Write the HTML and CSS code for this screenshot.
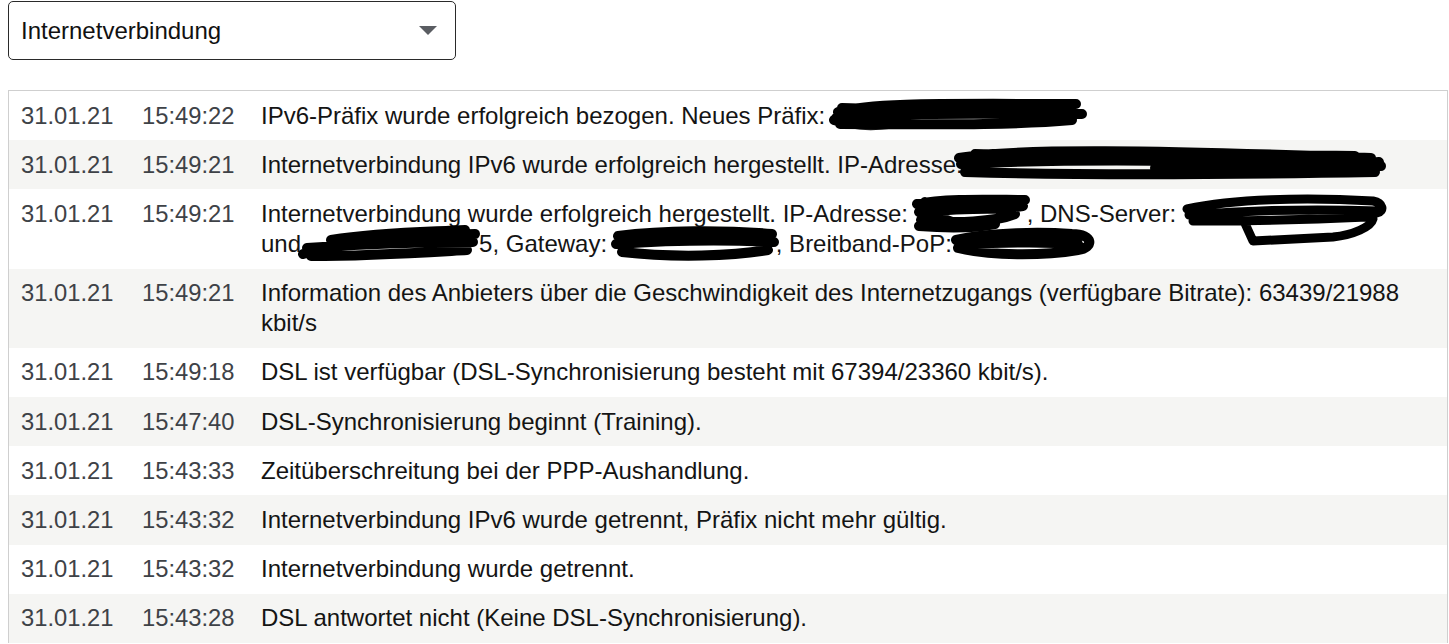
FILE: index.html
```html
<!DOCTYPE html>
<html lang="de">
<head>
<meta charset="utf-8">
<title>Ereignisse</title>
<link rel="stylesheet" href="styles.css">
</head>
<body>
<div class="select">
  <span class="select-label">Internetverbindung</span>
  <svg class="select-arrow" width="18" height="10" viewBox="0 0 18 10"><path d="M0 0 L18 0 L9 9 Z" fill="#5a5d62"/></svg>
</div>

<div class="log">
  <div class="row">
    <div class="date">31.01.21</div><div class="time">15:49:22</div>
    <div class="msg">IPv6-Präfix wurde erfolgreich bezogen. Neues Präfix: <svg class="redact" width="252" height="28" viewBox="0 0 252 28"><path d="M6 12 C40 2 120 4 244 4 M4 18 C70 12 150 14 250 14 M8 24 C90 24 170 26 240 20 M10 8 C60 10 140 12 230 10 M2 20 C20 26 40 26 60 24" stroke="#000" stroke-width="10" fill="none" stroke-linecap="round"/></svg></div>
  </div>
  <div class="row">
    <div class="date">31.01.21</div><div class="time">15:49:21</div>
    <div class="msg">Internetverbindung IPv6 wurde erfolgreich hergestellt. IP-Adresse:<svg class="redact over" width="428" height="30" viewBox="0 0 428 30"><path d="M4 10 C60 0 200 2 416 10 M6 16 C120 10 260 12 426 18 M10 24 C150 28 300 26 420 24 M20 6 C100 8 240 6 400 8 M200 20 C280 22 360 20 424 14" stroke="#000" stroke-width="10" fill="none" stroke-linecap="round"/></svg></div>
  </div>
  <div class="row">
    <div class="date">31.01.21</div><div class="time">15:49:21</div>
    <div class="msg">Internetverbindung wurde erfolgreich hergestellt. IP-Adresse: <svg class="redact" width="112" height="30" viewBox="0 0 112 30"><path d="M2 6 C30 0 80 2 110 2 M4 14 C40 10 80 12 108 8 M6 22 C40 26 80 24 100 16 M10 4 C20 20 40 28 60 26 M4 28 C30 30 60 30 80 26" stroke="#000" stroke-width="10" fill="none" stroke-linecap="round"/></svg>, DNS-Server: <svg class="redact tall" width="200" height="30" viewBox="0 0 200 30"><path d="M4 10 C50 0 120 -2 190 2 C200 4 202 12 194 14 M6 16 C80 10 140 10 196 12 M10 22 C80 22 140 20 184 18 M60 20 L70 42 L150 38 C170 36 188 28 190 20" stroke="#000" stroke-width="9" fill="none" stroke-linecap="round" stroke-linejoin="round"/></svg><br>und<svg class="redact" width="178" height="30" viewBox="0 0 178 30"><path d="M2 26 C40 14 100 8 174 6 M6 20 C60 16 120 14 172 14 M10 28 C70 28 130 24 166 22 M30 12 C80 4 130 4 164 2" stroke="#000" stroke-width="10" fill="none" stroke-linecap="round"/></svg>5, Gateway: <svg class="redact" width="162" height="30" viewBox="0 0 162 30"><path d="M4 8 C50 2 110 2 158 6 M2 16 C60 12 120 12 160 14 M8 24 C60 30 120 28 154 22" stroke="#000" stroke-width="10" fill="none" stroke-linecap="round"/></svg>, Breitband-PoP:<svg class="redact" width="140" height="30" viewBox="0 0 140 30"><path d="M4 12 C40 4 90 4 120 6 C142 6 142 20 126 22 C90 28 40 28 6 20 M10 16 C60 14 100 14 126 16" stroke="#000" stroke-width="10" fill="none" stroke-linecap="round"/></svg></div>
  </div>
  <div class="row">
    <div class="date">31.01.21</div><div class="time">15:49:21</div>
    <div class="msg">Information des Anbieters über die Geschwindigkeit des Internetzugangs (verfügbare Bitrate): 63439/21988 kbit/s</div>
  </div>
  <div class="row">
    <div class="date">31.01.21</div><div class="time">15:49:18</div>
    <div class="msg">DSL ist verfügbar (DSL-Synchronisierung besteht mit 67394/23360 kbit/s).</div>
  </div>
  <div class="row">
    <div class="date">31.01.21</div><div class="time">15:47:40</div>
    <div class="msg">DSL-Synchronisierung beginnt (Training).</div>
  </div>
  <div class="row">
    <div class="date">31.01.21</div><div class="time">15:43:33</div>
    <div class="msg">Zeitüberschreitung bei der PPP-Aushandlung.</div>
  </div>
  <div class="row">
    <div class="date">31.01.21</div><div class="time">15:43:32</div>
    <div class="msg">Internetverbindung IPv6 wurde getrennt, Präfix nicht mehr gültig.</div>
  </div>
  <div class="row">
    <div class="date">31.01.21</div><div class="time">15:43:32</div>
    <div class="msg">Internetverbindung wurde getrennt.</div>
  </div>
  <div class="row">
    <div class="date">31.01.21</div><div class="time">15:43:28</div>
    <div class="msg">DSL antwortet nicht (Keine DSL-Synchronisierung).</div>
  </div>
</div>
</body>
</html>
```

FILE: styles.css
```css
html, body {
  background: #ffffff;
}
body {
  margin: 0 1px 0 8px;
  font-family: "Liberation Sans", Arial, sans-serif;
  font-size: 23.75px;
  color: #111;
}
.select {
  margin-top: 1px;
  box-sizing: border-box;
  width: 448px;
  height: 59px;
  border: 1px solid #2a2a2a;
  border-radius: 5px;
  display: flex;
  align-items: center;
  justify-content: space-between;
  padding: 0 18px 0 12px;
}
.select-label {
  color: #111;
  font-size: 24px;
  line-height: 30px;
}
.select-arrow {
  display: block;
  margin-top: 1px;
}
.log {
  margin-top: 30px;
  border: 1px solid #cfcfcf;
  border-bottom: none;
}
.row {
  display: grid;
  grid-template-columns: 121px 119px 1fr;
  line-height: 30px;
  padding: 9.6px 0;
}
.row:nth-child(even) {
  background: #f5f5f3;
}
.date, .time {
  padding-left: 12px;
  color: #3e4247;
}
.msg {
  padding: 0 12px 0 12px;
  font-size: 24px;
  color: #141414;
}
.redact {
  vertical-align: middle;
  overflow: visible;
  margin-top: -6px;
}
.redact.over {
  margin-left: -8px;
}
.redact.tall {
  margin-top: -4px;
}
```
